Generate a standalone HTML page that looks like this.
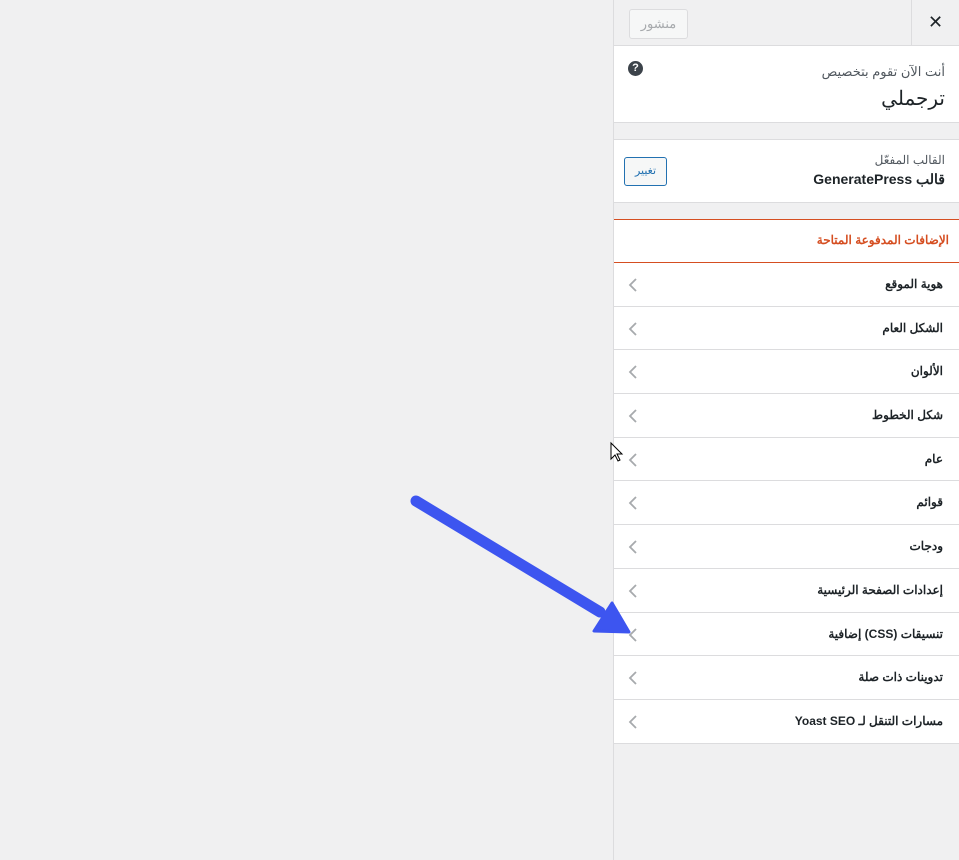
<!DOCTYPE html>
<html><head><meta charset="utf-8"><style>
*{box-sizing:border-box;margin:0;padding:0}
body{width:959px;height:860px;background:#f0f0f1;font-family:"Liberation Sans","Noto Sans CJK SC",sans-serif;position:relative;overflow:hidden;color:#1d2327}
#p{position:absolute;left:613px;top:0;width:346px;height:860px;border-left:1px solid #dcdcde;background:#f0f0f1}
.top{height:46px;border-bottom:1px solid #dcdcde;position:relative}
.pub{position:absolute;left:15px;top:9px;width:59px;height:30px;border:1px solid #dcdcde;border-radius:3px;background:#f6f7f7;color:#a7aaad;font-size:13px;text-align:center;line-height:28px}
.close{position:absolute;right:0;top:0;width:48px;height:45px;border-left:1px solid #dcdcde;font-size:18px;text-align:center;line-height:45px;color:#1d2327}
.info{background:#fff;height:77px;border-bottom:1px solid #dcdcde;direction:rtl;padding:18px 14px 0 0;position:relative}
.info .s{font-size:13px;color:#50575e}
.info .t{font-size:20px;margin-top:6px}
.q{position:absolute;left:14px;top:15px;width:15px;height:15px;border-radius:50%;background:#3c434a;color:#fff;font-size:11px;font-weight:bold;text-align:center;line-height:15px}
.theme{margin-top:16px;background:#fff;height:64px;border-top:1px solid #dcdcde;border-bottom:1px solid #dcdcde;direction:rtl;padding:13px 14px 0 0;position:relative}
.theme .s{font-size:12px;color:#50575e}
.theme .t{font-size:14px;font-weight:bold;margin-top:4px;color:#1d2327}
.btn{position:absolute;left:10px;top:17px;width:43px;height:29px;border:1px solid #2271b1;border-radius:3px;background:#f6f7f7;color:#2271b1;font-size:11px;text-align:center;line-height:27px}
.hd{margin-top:16px;background:#fff;height:44px;border-top:1px solid #d54e21;border-bottom:1px solid #d54e21;direction:rtl;padding:13px 10px 0 0;color:#d54e21;font-size:12px;font-weight:bold}
.it{height:43.7px;background:#fff;border-bottom:1px solid #dcdcde;direction:rtl;position:relative;font-size:12px;font-weight:bold;color:#1d2327;padding:14px 16px 0 0}
.it svg{position:absolute;left:14px;top:14px}
</style></head><body>
<div id="p">
<div class="top"><div class="pub">منشور</div><div class="close">✕</div></div>
<div class="info"><div class="s">أنت الآن تقوم بتخصيص</div><div class="t">ترجملي</div><div class="q">?</div></div>
<div class="theme"><div class="s">القالب المفعّل</div><div class="t">قالب GeneratePress</div><div class="btn">تغيير</div></div>
<div class="hd">الإضافات المدفوعة المتاحة</div>
<div class="it">هوية الموقع<svg width="10" height="16"><path d="M8 2L2 8l6 6" stroke="#a7aaad" stroke-width="1.8" fill="none"/></svg></div>
<div class="it">الشكل العام<svg width="10" height="16"><path d="M8 2L2 8l6 6" stroke="#a7aaad" stroke-width="1.8" fill="none"/></svg></div>
<div class="it">الألوان<svg width="10" height="16"><path d="M8 2L2 8l6 6" stroke="#a7aaad" stroke-width="1.8" fill="none"/></svg></div>
<div class="it">شكل الخطوط<svg width="10" height="16"><path d="M8 2L2 8l6 6" stroke="#a7aaad" stroke-width="1.8" fill="none"/></svg></div>
<div class="it">عام<svg width="10" height="16"><path d="M8 2L2 8l6 6" stroke="#a7aaad" stroke-width="1.8" fill="none"/></svg></div>
<div class="it">قوائم<svg width="10" height="16"><path d="M8 2L2 8l6 6" stroke="#a7aaad" stroke-width="1.8" fill="none"/></svg></div>
<div class="it">ودجات<svg width="10" height="16"><path d="M8 2L2 8l6 6" stroke="#a7aaad" stroke-width="1.8" fill="none"/></svg></div>
<div class="it">إعدادات الصفحة الرئيسية<svg width="10" height="16"><path d="M8 2L2 8l6 6" stroke="#a7aaad" stroke-width="1.8" fill="none"/></svg></div>
<div class="it">تنسيقات (CSS) إضافية<svg width="10" height="16"><path d="M8 2L2 8l6 6" stroke="#a7aaad" stroke-width="1.8" fill="none"/></svg></div>
<div class="it">تدوينات ذات صلة<svg width="10" height="16"><path d="M8 2L2 8l6 6" stroke="#a7aaad" stroke-width="1.8" fill="none"/></svg></div>
<div class="it">مسارات التنقل لـ Yoast SEO<svg width="10" height="16"><path d="M8 2L2 8l6 6" stroke="#a7aaad" stroke-width="1.8" fill="none"/></svg></div>
</div>
<svg style="position:absolute;left:0;top:0" width="959" height="860">
<line x1="416" y1="501" x2="600" y2="612" stroke="#3d55f0" stroke-width="11" stroke-linecap="round"/>
<path d="M594 631L629 632L612 603Z" fill="#3d55f0" stroke="#3d55f0" stroke-width="3" stroke-linejoin="round"/>
<path d="M611 443l0 16 4-4 3 6 2-1-3-6 5 0z" fill="#fff" stroke="#000" stroke-width="1"/>
</svg>
</body></html>
